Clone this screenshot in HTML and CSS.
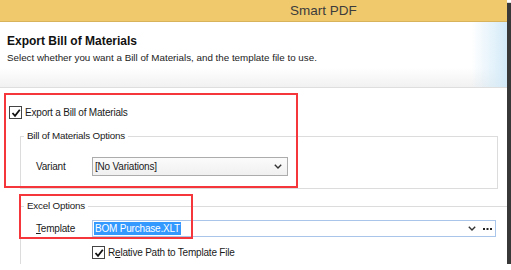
FILE: index.html
```html
<!DOCTYPE html>
<html>
<head>
    <title>Smart PDF - Export Bill of Materials</title>
    <link rel="stylesheet" href="styles.css">
</head>
<body>
    <div class="window">
        <div class="titlebar">Smart PDF</div>

        <div class="header">
            <h1>Export Bill of Materials</h1>
            <p>Select whether you want a Bill of Materials, and the template file to use.</p>
        </div>

        <div class="content">
            <label class="check-row first">
                <span class="checkbox">
                    <svg width="10" height="10" viewBox="0 0 10 10"><polyline points="1.5,5 4,7.8 8.8,1.8" fill="none" stroke="#111" stroke-width="1.8"/></svg>
                </span>
                Export a Bill of Materials
            </label>

            <fieldset class="group bom">
                <legend>Bill of Materials Options</legend>
                <div class="field-row">
                    <span class="field-label">Variant</span>
                    <div class="combo">
                        <span>[No Variations]</span>
                        <svg class="chevron" width="8" height="5" viewBox="0 0 8 5"><polyline points="0.8,0.8 4,4 7.2,0.8" fill="none" stroke="#333" stroke-width="1.4"/></svg>
                    </div>
                </div>
            </fieldset>

            <fieldset class="group excel">
                <legend>Excel Options</legend>
                <div class="field-row">
                    <span class="field-label"><u>T</u>emplate</span>
                    <div class="path-box">
                        <span class="selected">BOM Purchase.XLT</span>
                        <svg class="chevron" width="8" height="5" viewBox="0 0 8 5"><polyline points="0.8,0.8 4,4 7.2,0.8" fill="none" stroke="#333" stroke-width="1.4"/></svg>
                        <svg class="dots" width="9" height="2" viewBox="0 0 9 2"><rect x="0" y="0" width="2" height="2" fill="#222"/><rect x="3.5" y="0" width="2" height="2" fill="#222"/><rect x="7" y="0" width="2" height="2" fill="#222"/></svg>
                    </div>
                </div>
                <label class="check-row relative">
                    <span class="checkbox">
                        <svg width="10" height="10" viewBox="0 0 10 10"><polyline points="1.5,5 4,7.8 8.8,1.8" fill="none" stroke="#111" stroke-width="1.8"/></svg>
                    </span>
                    R<u>e</u>lative Path to Template File
                </label>
            </fieldset>
        </div>

        <!-- annotation boxes drawn over the dialog -->
        <div class="mark mark-bom"></div>
        <div class="mark mark-excel"></div>
    </div>
</body>
</html>
```

FILE: styles.css
```css
body {
    margin: 0;
    background: #ffffff;
    font-family: 'Liberation Sans', Arial, sans-serif;
    color: #1a1a1a;
}

.window {
    position: relative;
    width: 507px;
    height: 264px;
    overflow: hidden;
    background: #ffffff;
    box-shadow: 4px 3px 1px rgba(0, 0, 0, 0.78);
}

.titlebar {
    height: 21px;
    border-bottom: 1px solid #d9b25c;
    background-color: #f0c96c;
    display: flex;
    align-items: center;
    justify-content: center;
    padding-left: 140px;
    font-size: 13.5px;
    color: #3c3c3c;
}

.header {
    height: 53px;
    padding: 12px 7px 0 7px;
    border-bottom: 1px solid #dedede;
    background:
        linear-gradient(to right, rgba(255, 255, 255, 0) 93%, #d3eaf8 100%),
        linear-gradient(#ffffff 70%, #f1f1f1 100%);
}

.header h1 {
    margin: 0;
    font-size: 12px;
    line-height: 14px;
    font-weight: bold;
    color: #111111;
}

.header p {
    margin: 4px 0 0 0;
    font-size: 9.8px;
    line-height: 12px;
    color: #222222;
}

.content {
    font-size: 10px;
    letter-spacing: -0.2px;
}

.check-row {
    display: flex;
    align-items: center;
    height: 13px;
}

.check-row.first {
    margin: 18px 0 0 9px;
}

.check-row.relative {
    margin: 9px 0 0 71px;
}

.checkbox {
    width: 11px;
    height: 11px;
    border: 1px solid #444444;
    background: #ffffff;
    display: flex;
    align-items: center;
    justify-content: center;
    margin-right: 3px;
    flex-shrink: 0;
}

.group {
    margin: 11px 0 0 20px;
    padding: 0 0 12px 0;
    border: 1px solid #dcdcdc;
    min-width: 0;
}

.group legend {
    margin-left: 3px;
    padding: 0 3px;
    line-height: 12px;
    font-size: 9.8px;
}

.group.bom {
    width: 476px;
}

.group.excel {
    width: 520px;
}

.group.bom .field-row {
    margin-top: 15px;
}

.group.excel .field-row {
    margin-top: 8px;
}

.field-row {
    display: flex;
    align-items: center;
    padding-left: 15px;
}

.field-label {
    width: 56px;
}

.combo {
    width: 187px;
    height: 17px;
    border: 1px solid #acacac;
    background: linear-gradient(#fbfbfb, #f0f0f0);
    display: flex;
    align-items: center;
    justify-content: space-between;
    padding: 0 5px 0 2px;
}

.path-box {
    width: 398px;
    height: 15px;
    border: 1px solid #a9c6ea;
    background: #ffffff;
    display: flex;
    align-items: center;
    padding: 0 3px 0 1px;
}

.path-box .selected {
    background: #3399ff;
    color: #ffffff;
    line-height: 13px;
    padding: 0 1px;
}

.path-box .chevron {
    margin-left: auto;
    margin-right: 7px;
}

.mark {
    position: absolute;
    border: 2px solid #f5363b;
    box-sizing: border-box;
}

.mark-bom {
    left: 4px;
    top: 93px;
    width: 294px;
    height: 95px;
}

.mark-excel {
    left: 19px;
    top: 194px;
    width: 174px;
    height: 45px;
}
```
